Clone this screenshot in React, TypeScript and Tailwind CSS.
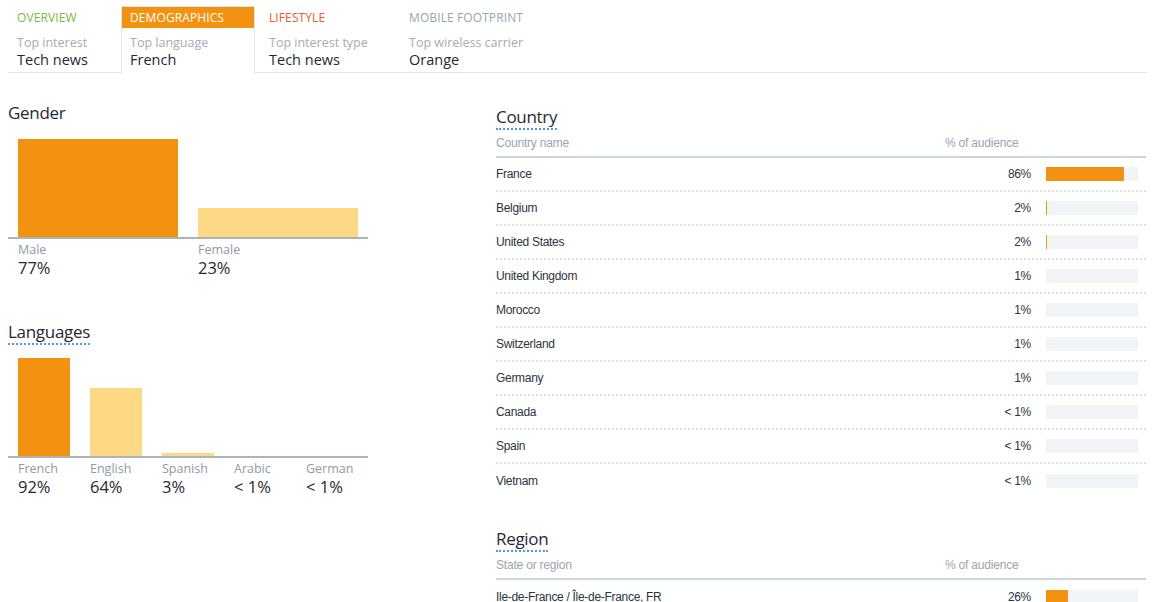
import React from "react";

const ORANGE = "bg-[#f39110]";

function Tab({
  title,
  titleColor,
  label,
  value,
  active,
  width,
  pl,
}: {
  title: string;
  titleColor: string;
  label: string;
  value: string;
  active?: boolean;
  width: string;
  pl: string;
}) {
  return (
    <div
      className={
        "flex flex-col shrink-0 " +
        width +
        (active
          ? " border-l border-r border-t border-[#dfe5ea] bg-white -mb-px h-[67px]"
          : " h-[66px] pt-px")
      }
    >
      <div
        className={
          "h-[21px] flex items-center text-[12px] uppercase tracking-[0.1px] " +
          pl +
          (active ? " bg-[#f39110] text-white" : " " + titleColor)
        }
      >
        {title}
      </div>
      <div className={"text-[12.5px] leading-[16px] text-[#a3adb7] mt-[7px] " + pl}>{label}</div>
      <div className={"text-[14.5px] leading-[17px] text-[#1f2933] " + pl}>{value}</div>
    </div>
  );
}

function Title({ text, underline }: { text: string; underline?: boolean }) {
  return (
    <div>
      <span
        className={
          "inline-block text-[17px] leading-[22px] text-[#1f2933] tracking-[-0.3px] border-b-2 border-dotted " +
          (underline ? "border-[#4b9fe1]" : "border-transparent")
        }
      >
        {text}
      </span>
    </div>
  );
}

type Bar = { label: string; value: string; pct: number; primary?: boolean };

function BarChart({ bars, barW, colW, max }: { bars: Bar[]; barW: string; colW: string; max: number }) {
  return (
    <div className="w-[360px]">
      <div className="h-[98px] mt-[15px] flex items-end pl-[10px] border-b-2 border-[#aab4bd]">
        {bars.map((b) => (
          <div key={b.label} className={"flex items-end h-full shrink-0 " + colW}>
            <div
              className={barW + " " + (b.primary ? ORANGE : "bg-[#fed985]")}
              style={{ height: `${(b.pct / max) * 98}px` }}
            />
          </div>
        ))}
      </div>
      <div className="flex pl-[10px]">
        {bars.map((b) => (
          <div key={b.label} className={"shrink-0 pt-[3px] " + colW}>
            <div className="text-[12.5px] leading-[16px] text-[#8e9aa6]">{b.label}</div>
            <div className="text-[16.5px] leading-[20px] text-[#1f2933]">{b.value}</div>
          </div>
        ))}
      </div>
    </div>
  );
}

type Row = { name: string; value: string; pct: number };

function Table({ title, col, rows }: { title: string; col: string; rows: Row[] }) {
  return (
    <div className="w-[650px]">
      <Title text={title} underline />
      <div
        className="h-[28px] flex items-center border-b-2 border-[#cdd5dc] text-[12px] text-[#9aa5b0] tracking-[-0.2px]"
        style={{ fontFamily: '"Liberation Sans", Arial, sans-serif' }}
      >
        <div className="flex-1">{col}</div>
        <div className="w-[86px]">% of audience</div>
        <div className="w-[115px]" />
      </div>
      {rows.map((r, i) => (
        <div
          key={r.name}
          className={
            "h-[34px] flex items-center text-[12px] text-[#2a3440] tracking-[-0.3px] " +
            (i < rows.length - 1 ? "border-b-2 border-dotted border-[#dde2e7]" : "")
          }
          style={{ fontFamily: '"Liberation Sans", Arial, sans-serif' }}
        >
          <div className="flex-1">{r.name}</div>
          <div className="w-[86px] text-right">{r.value}</div>
          <div className="w-[115px] pl-[15px] pr-[8px]">
            <div className="h-[14px] w-[92px] bg-[#f2f5f8]">
              <div className={"h-full " + ORANGE} style={{ width: `${r.pct * 0.92}px` }} />
            </div>
          </div>
        </div>
      ))}
    </div>
  );
}

export default function App() {
  const countries: Row[] = [
    { name: "France", value: "86%", pct: 85 },
    { name: "Belgium", value: "2%", pct: 1.5 },
    { name: "United States", value: "2%", pct: 1.5 },
    { name: "United Kingdom", value: "1%", pct: 0 },
    { name: "Morocco", value: "1%", pct: 0 },
    { name: "Switzerland", value: "1%", pct: 0 },
    { name: "Germany", value: "1%", pct: 0 },
    { name: "Canada", value: "< 1%", pct: 0 },
    { name: "Spain", value: "< 1%", pct: 0 },
    { name: "Vietnam", value: "< 1%", pct: 0 },
  ];
  return (
    <div
      className="w-[1170px] h-[602px] overflow-hidden bg-white pl-2 pr-[23px] pt-[6px]"
      style={{ fontFamily: '"Open Sans", "Noto Sans", sans-serif' }}
    >
      <div className="flex border-b border-[#dfe5ea] items-start">
        <Tab width="w-[113px]" pl="pl-[9px]" title="Overview" titleColor="text-[#7db644]" label="Top interest" value="Tech news" />
        <Tab active width="w-[134px]" pl="pl-[8px]" title="Demographics" titleColor="" label="Top language" value="French" />
        <Tab width="w-[140px]" pl="pl-[14px]" title="Lifestyle" titleColor="text-[#f0592a]" label="Top interest type" value="Tech news" />
        <Tab width="w-[200px]" pl="pl-[14px]" title="Mobile footprint" titleColor="text-[#9aa5ae]" label="Top wireless carrier" value="Orange" />
      </div>
      <div className="flex">
        <div className="w-[360px] pt-[28px]">
          <Title text="Gender" />
          <BarChart
            max={77}
            barW="w-[160px]"
            colW="w-[180px]"
            bars={[
              { label: "Male", value: "77%", pct: 77, primary: true },
              { label: "Female", value: "23%", pct: 23 },
            ]}
          />
          <div className="mt-[42px]">
            <Title text="Languages" underline />
            <div className="mt-[4px]">
              <BarChart
                max={92}
                barW="w-[52px]"
                colW="w-[72px]"
                bars={[
                  { label: "French", value: "92%", pct: 92, primary: true },
                  { label: "English", value: "64%", pct: 64 },
                  { label: "Spanish", value: "3%", pct: 3 },
                  { label: "Arabic", value: "< 1%", pct: 0 },
                  { label: "German", value: "< 1%", pct: 0 },
                ]}
              />
            </div>
          </div>
        </div>
        <div className="ml-[128px] pt-[32px]">
          <Table title="Country" col="Country name" rows={countries} />
          <div className="mt-[29px]">
            <Table title="Region" col="State or region" rows={[{ name: "Ile-de-France / Île-de-France, FR", value: "26%", pct: 24 }]} />
          </div>
        </div>
      </div>
    </div>
  );
}
